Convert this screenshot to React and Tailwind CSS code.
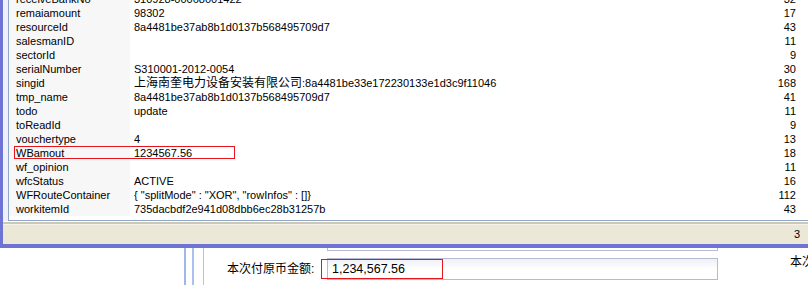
import React from "react";

const rows = [
  ["receiveBankNo", "310928-00068001422", 32],
  ["remaiamount", "98302", 17],
  ["resourceId", "8a4481be37ab8b1d0137b568495709d7", 43],
  ["salesmanID", "", 11],
  ["sectorId", "", 9],
  ["serialNumber", "S310001-2012-0054", 30],
  ["singid", "__CJK__", 168],
  ["tmp_name", "8a4481be37ab8b1d0137b568495709d7", 41],
  ["todo", "update", 11],
  ["toReadId", "", 9],
  ["vouchertype", "4", 13],
  ["WBamout", "1234567.56", 18],
  ["wf_opinion", "", 11],
  ["wfcStatus", "ACTIVE", 16],
  ["WFRouteContainer", '{ "splitMode" : "XOR", "rowInfos" : []}', 112],
  ["workitemId", "735dacbdf2e941d08dbb6ec28b31257b", 43],
];

export default function App() {
  return (
    <div
      className="w-[808px] h-[285px] bg-white overflow-hidden relative text-black"
      style={{ fontFamily: '"Liberation Sans", "Noto Sans CJK SC", sans-serif' }}
    >
      {/* window */}
      <div className="h-[248px] flex flex-col border-l-[3px] border-b-[4px] border-[#6d74d4] bg-[#eef0fa]">
        <div className="h-[221px] ml-[5px] border-l border-b border-[#8fa6c8] bg-white overflow-hidden relative">
          <div className="-mt-[8px] flex flex-col">
            {rows.map(([k, v, n]) => (
              <div key={k} className="h-[14px] flex items-center text-[11px] leading-[14px]">
                <div className="w-[121px] h-full bg-[#f7f7f7] pl-[7px] shrink-0 whitespace-nowrap">{k}</div>
                <div className="flex-1 pl-[4px] whitespace-nowrap">
                  {v === "__CJK__" ? (
                    <>
                      <span className="text-[12px]">上海南奎电力设备安装有限公司</span>
                      <span>:8a4481be33e172230133e1d3c9f11046</span>
                    </>
                  ) : (
                    v
                  )}
                </div>
                <div className="w-[60px] text-right pr-[12px] shrink-0">{n}</div>
              </div>
            ))}
          </div>
          <div className="absolute left-[5px] top-[146px] w-[221px] h-[13px] border border-[#e8141c]" />
        </div>
        <div className="h-px bg-white" />
        <div className="h-[2px] bg-[#cbc8b8]" />
        <div className="h-px bg-[#f4f2ea]" />
        <div className="flex-1 bg-[#ebe8d8] flex items-center justify-end pr-[8px] text-[11px]">3</div>
      </div>

      {/* lower page */}
      <div className="flex h-[37px]">
        <div className="w-[184px] shrink-0" />
        <div className="w-[2px] bg-[#9db7ea] shrink-0" />
        <div className="w-[6px] shrink-0" />
        <div className="w-[2px] bg-[#a9c1ee] shrink-0" />
        <div className="w-[9px] shrink-0" />
        <div className="w-px bg-[#c2c2cc] shrink-0" />
        <div className="flex-1 relative">
          <div className="absolute left-[123px] top-0 w-[391px] h-[3px] border-x border-b border-[#b6bad6]" />
          <div className="flex items-center pt-[10px]">
            <div className="w-[123px] shrink-0 pl-[23px] text-[12px] whitespace-nowrap leading-[22px]">本次付原币金额:</div>
            <div className="w-[391px] h-[22px] border border-[#b6bad6] bg-gradient-to-b from-[#eef0f6] via-white to-white flex items-center pl-[4px] text-[12.5px]">
              1,234,567.56
            </div>
            <div className="flex-1" />
          </div>
          <div className="absolute left-[117px] top-[11px] w-[122px] h-[20px] border border-[#e8141c]" />
          <div className="absolute left-[586px] top-[5px] text-[12px] whitespace-nowrap">本次</div>
        </div>
      </div>
    </div>
  );
}
